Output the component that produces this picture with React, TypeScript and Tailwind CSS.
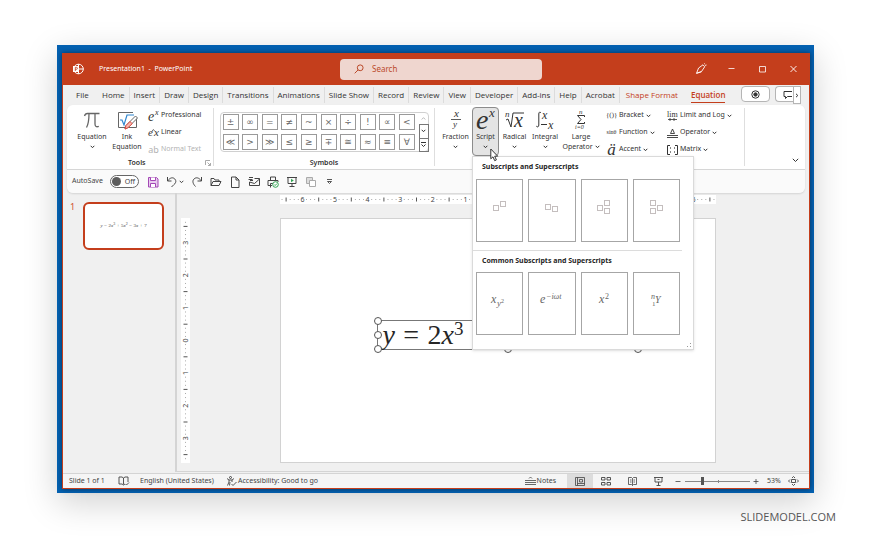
import type { ReactNode } from "react";
import clsx from "clsx";

type IconProps = { children: ReactNode; w?: number; h?: number; className?: string };

const Icon = ({ children, w = 12, h = 12, className }: IconProps) => (
  <svg
    width={w}
    height={h}
    viewBox={`0 0 ${w} ${h}`}
    fill="none"
    stroke="currentColor"
    strokeWidth="1"
    className={clsx("shrink-0 overflow-visible", className)}
    aria-hidden="true"
  >
    {children}
  </svg>
);

const Chevron = () => (
  <Icon w={5} h={4}>
    <path d="M.7 .8 2.5 2.7 4.3 .8" />
  </Icon>
);

const serif = "font-['Liberation_Serif',serif]";

const TitleBar = () => (
  <header className="flex h-8 items-center bg-[#c43e1c] text-white">
    <div className="flex w-[277px] shrink-0 items-center gap-[15px] pl-[9px]">
      <Icon>
        <circle cx="6.5" cy="6" r="4.800" />
        <path d="M6.500 1.200V6h4.800M6.500 6v4.800" />
        <rect x="1.500" y="3.500" width="5" height="5" fill="white" />
        <path d="M3.300 8V4.300h1.100a.9.9 0 0 1 0 2H3.300" stroke="#c43e1c" strokeWidth=".8" />
      </Icon>
      <h1 className="text-[7px] whitespace-pre">Presentation1  -  PowerPoint</h1>
    </div>
    <label className="flex h-[21px] w-[202px] items-center gap-2 rounded-sm bg-[#efd6cf] px-[14px] text-[#bb4a2a]">
      <Icon w={10} h={10}>
        <circle cx="6.200" cy="3.800" r="2.900" />
        <path d="M4.100 5.900.7 9.300" />
      </Icon>
      <input
        type="search"
        aria-label="Search"
        placeholder="Search"
        className="w-full bg-transparent text-[8px] outline-none placeholder:text-[#bb4a2a]"
      />
    </label>
    <div className="ml-auto flex">
      <button aria-label="Drawing" className="flex w-[31px] justify-center">
        <Icon>
          <path d="M1.500 10.300 3.600 5 8 1.800l1.700 2L6.400 8.700zM1.500 10.300l4.900-1.600M9 1.200l.8-.7M10 2.400l1.500-.4" strokeWidth=".9" />
        </Icon>
      </button>
      <button aria-label="Minimize" className="flex w-[31px] justify-center">
        <Icon>
          <path d="M2.500 5.500h6" strokeWidth=".8" />
        </Icon>
      </button>
      <button aria-label="Maximize" className="flex w-[31px] justify-center">
        <Icon>
          <path d="M2.500 3.500h6v5.500h-6z" strokeWidth=".8" />
        </Icon>
      </button>
      <button aria-label="Close" className="flex w-[31px] justify-center">
        <Icon>
          <path d="m2.500 3 6 6M8.500 3l-6 6" strokeWidth=".9" />
        </Icon>
      </button>
    </div>
  </header>
);

const tabs = [
  "Home", "Insert", "Draw", "Design", "Transitions", "Animations", "Slide Show",
  "Record", "Review", "View", "Developer", "Add-ins", "Help", "Acrobat",
];

const Tabs = () => (
  <nav className="flex h-5 items-center font-['Open_Sans',sans-serif] text-[8px] whitespace-nowrap text-[#333]">
    <button className="w-[35px] pl-[13px] text-left">File</button>
    {tabs.map((t) => (
      <button key={t} className="h-4 border-r border-[#dcdcdc] px-1">
        {t}
      </button>
    ))}
    <button className="px-[6px] text-[#c43e1c]">Shape Format</button>
    <button className="ml-[7px] flex h-[15px] items-center border-b border-[#c43e1c] font-semibold text-[#c43e1c]">
      Equation
    </button>
    <div className="ml-auto flex pr-2">
      <button aria-label="Record" className="flex h-4 w-[29px] items-center justify-center rounded-sm border border-[#b5b5b5] bg-white">
        <Icon w={9} h={9}>
          <circle cx="4.500" cy="4.500" r="3.700" />
          <circle cx="4.500" cy="4.500" r="1.700" fill="currentColor" />
        </Icon>
      </button>
      <button aria-label="Comments" className="ml-[5px] flex h-4 w-[18px] items-center justify-end rounded-l-sm border border-r-0 border-[#b5b5b5] bg-white pr-px">
        <Icon w={9} h={9}>
          <path d="M9 1.500H1v5h1.500v2l2-2H9" />
        </Icon>
      </button>
      <button aria-label="More commands" className="flex h-[18px] w-2 items-center justify-center border border-[#b5b5b5] bg-white">
        <Icon w={4} h={5}>
          <path d="M1 .8 2.800 2.500 1 4.200" />
        </Icon>
      </button>
    </div>
  </nav>
);

const symbols = [
  "±", "∞", "=", "≠", "~", "×", "÷", "!", "∝", "<",
  "≪", ">", "≫", "≤", "≥", "∓", "≅", "≈", "≡", "∀",
];

const BigButton = ({ icon, label, width, arrow = true, children }: {
  icon: ReactNode; label: string; width: string; arrow?: boolean; children?: ReactNode;
}) => (
  <button className={clsx("flex h-[49px] flex-col items-center", width)}>
    <span className="flex h-[25px] items-center justify-center">{icon}</span>
    <span className="leading-[10px]">{label}</span>
    {children}
    {arrow && (
      <span className="mt-[3px]">
        <Chevron />
      </span>
    )}
  </button>
);

const SmallButton = ({ icon, label, arrow, muted }: { icon: ReactNode; label: string; arrow?: boolean; muted?: boolean }) => (
  <button className={clsx("flex h-[17px] items-center gap-[2px]", muted && "text-[#b3b3b3]")}>
    {icon}
    <span>{label}</span>
    {arrow && <Chevron />}
  </button>
);

// text glyph drawn inside an icon
const G = ({ x, y, s, i, children }: { x: number; y: number; s: number; i?: boolean; children: string }) => (
  <text
    x={x}
    y={y}
    fontSize={s}
    fontStyle={i ? "italic" : "normal"}
    fontFamily="Liberation Serif, DejaVu Serif, serif"
    fill="currentColor"
    stroke="none"
  >
    {children}
  </text>
);

const Box = ({ x, y }: { x: number; y: number }) => <rect x={x + 0.5} y={y + 0.5} width="5" height="5" stroke="#c4bebe" />;

const templates = [
  { name: "Superscript", boxes: [[3, 6], [10, 2]] },
  { name: "Subscript", boxes: [[3, 5], [10, 7]] },
  { name: "Subscript-Superscript", boxes: [[3, 6], [10, 1], [10, 9]] },
  { name: "Left Subscript-Superscript", boxes: [[4, 1], [4, 9], [11, 6]] },
];

const common = [
  <>
    <G x={0} y={12} s={12} i>x</G>
    <G x={6} y={15} s={9} i>y</G>
    <G x={10} y={12} s={6}>2</G>
  </>,
  <>
    <G x={0} y={12} s={12} i>e</G>
    <G x={6} y={8} s={8} i>−iωt</G>
  </>,
  <>
    <G x={4} y={12} s={12} i>x</G>
    <G x={10} y={8} s={8}>2</G>
  </>,
  <>
    <G x={4} y={8} s={8} i>n</G>
    <G x={5} y={15} s={7}>1</G>
    <G x={8} y={12} s={10} i>Y</G>
  </>,
];

const card = "flex h-[63px] items-center justify-center border border-[#a6a6a6] bg-white pb-2";

const ScriptMenu = () => (
  <div className="absolute top-full left-0 z-10 h-[194px] w-[222px] border border-[#dadada] bg-white text-left shadow-sm">
    <h2 className="pt-[5px] pl-[9px] text-[7px] leading-[10px] font-bold text-[#262626]">Subscripts and Superscripts</h2>
    <div className="mt-[7px] ml-[3px] grid w-[204px] grid-cols-4 gap-[5px]">
      {templates.map((t) => (
        <button key={t.name} aria-label={t.name} className={card}>
          <Icon w={20} h={16}>
            {t.boxes.map(([x, y], i) => (
              <Box key={i} x={x} y={y} />
            ))}
          </Icon>
        </button>
      ))}
    </div>
    <hr className="mt-2 w-[209px] border-[#dcdcdc]" />
    <h2 className="pt-[5px] pl-[9px] text-[7px] leading-[10px] font-bold text-[#262626]">Common Subscripts and Superscripts</h2>
    <div className="mt-[6px] ml-[3px] grid w-[204px] grid-cols-4 gap-[5px] text-[#666]">
      {common.map((c, i) => (
        <button key={i} className={card}>
          <Icon w={i === 1 ? 23 : 18} h={18}>
            {c}
          </Icon>
        </button>
      ))}
    </div>
    <Icon w={6} h={6} className="absolute right-px bottom-px text-[#999]">
      <path d="M4 1.500h1M4 4.500h1M1 4.500h1" />
    </Icon>
  </div>
);

const Divider = () => <div className="mt-[3px] h-[58px] w-px bg-[#dedede]" />;

const Ribbon = () => (
  <section className="flex h-16 rounded-t-md bg-white text-[7px] whitespace-nowrap text-[#333]">
    <div className="flex w-[146px] flex-col">
      <div className="flex pt-[2px] pl-[7px]">
        <BigButton
          width="w-[36px]"
          label="Equation"
          icon={
            <Icon w={18} h={18}>
              <path d="M1.500 5C2 3 3 2.500 4.500 2.500H16.500M6 2.500C6 9 5.500 13 3.500 16.500M12 2.500V13c0 2.500 1.500 3.300 3.800 2.300" stroke="#666" strokeWidth="1.300" />
            </Icon>
          }
        />
        <BigButton
          width="w-[34px]"
          label="Ink"
          arrow={false}
          icon={
            <Icon w={22} h={20}>
              <path d="M20.500 8V17.500H2.500V2.500H17" stroke="#666" />
              <path d="m4 10 2 0 2 5 3-10h7" stroke="#2f86cf" strokeWidth="1.200" />
              <path d="m9 19 1-3.500L19.500 6l2 2-9.500 9.500z" fill="#fff" stroke="#666" />
              <path d="m9 19 1-3.500 4-4 2.200 2.200-4.200 4z" fill="#f4b9b0" stroke="#e0473c" />
            </Icon>
          }
        >
          <span className="leading-[10px]">Equation</span>
        </BigButton>
        <div className="pl-1">
          <SmallButton
            label="Professional"
            icon={
              <Icon w={11} h={14}>
                <G x={0} y={12} s={14} i>e</G>
                <G x={7} y={6} s={8} i>x</G>
              </Icon>
            }
          />
          <SmallButton
            label="Linear"
            icon={
              <Icon w={11} h={12}>
                <G x={0} y={9} s={11} i>e</G>
                <path d="m4.200 4 1.200-1.500L6.600 4" strokeWidth=".7" />
                <G x={6} y={9} s={11} i>x</G>
              </Icon>
            }
          />
          <SmallButton muted label="Normal Text" icon={<span className="w-[11px] text-[9px]">ab</span>} />
        </div>
      </div>
      <div className="flex pl-[61px] leading-[10px] font-semibold">
        Tools
        <Icon w={6} h={6} className="mt-[2px] mr-[2px] ml-auto text-[#aaa]">
          <path d="M.5 5V.5H5M2.500 2.500 5.500 5.500M5.500 3v2.500H3" />
        </Icon>
      </div>
    </div>
    <Divider />
    <div className="flex w-[220px] flex-col items-center">
      <div className="mt-[7px] flex h-10 w-[209px] rounded-sm border border-[#d0d0d0] pl-[2px]">
        <div className="grid w-[196px] grid-cols-10 content-center justify-items-start gap-y-1">
          {symbols.map((s) => (
            <button
              key={s}
              className="flex size-4 items-center justify-center border border-[#9a9a9a] font-['DejaVu_Sans',sans-serif] text-[9px] leading-none text-[#666]"
            >
              {s}
            </button>
          ))}
        </div>
        <div className="-my-px -mr-px ml-auto flex w-[10px] flex-col">
          <button aria-label="Scroll up" className="flex flex-1 rotate-180 items-center justify-center text-[#bbb]">
            <Chevron />
          </button>
          <button aria-label="Scroll down" className="flex flex-1 items-center justify-center border border-[#777]">
            <Chevron />
          </button>
          <button aria-label="More symbols" className="flex flex-1 items-center justify-center border border-t-0 border-[#777]">
            <Icon w={7} h={7}>
              <path d="M1 1.500h5M1.500 3.500l2 2 2-2" />
            </Icon>
          </button>
        </div>
      </div>
      <div className="mt-[6px] leading-[10px] font-semibold">Symbols</div>
    </div>
    <Divider />
    <div className="flex items-start pt-[2px] pl-1">
      <BigButton
        width="w-[33px]"
        label="Fraction"
        icon={
          <Icon w={12} h={23}>
            <G x={4} y={9} s={11} i>x</G>
            <path d="M1 11.500h10" strokeWidth=".8" />
            <G x={3} y={19} s={9} i>y</G>
          </Icon>
        }
      />
      <div className="relative">
        <div className="rounded-sm bg-[#e4e4e4] outline -outline-offset-1 outline-[#8c8c8c]">
          <BigButton
            width="w-[27px]"
            label="Script"
            icon={
              <Icon w={22} h={25}>
                <G x={1} y={22} s={28} i>e</G>
                <G x={14} y={10} s={13} i>x</G>
              </Icon>
            }
          />
        </div>
        <ScriptMenu />
        <Icon w={9} h={14} className="absolute top-[41px] left-[18px] z-20">
          <path d="M.8 1v9.800L3 8.800l1.700 3.900 1.700-.8-1.700-3.700h3z" fill="#fff" stroke="#333" />
        </Icon>
      </div>
      <BigButton
        width="w-[31px]"
        label="Radical"
        icon={
          <Icon w={20} h={22}>
            <G x={0} y={8} s={9} i>n</G>
            <path d="m1 11 2-1 3 8L8 4h11" />
            <G x={9} y={18} s={20} i>x</G>
          </Icon>
        }
      />
      <BigButton
        width="w-[30px]"
        label="Integral"
        icon={
          <Icon w={20} h={22}>
            <path d="M6 4C5 2.500 3.800 3 3.800 5v11c0 2-1.300 2.500-2.500 1.200" />
            <G x={7} y={10} s={12} i>x</G>
            <path d="M6 15.500h6" />
            <G x={13} y={20} s={12} i>x</G>
          </Icon>
        }
      />
      <BigButton
        width="w-[42px]"
        label="Large"
        arrow={false}
        icon={
          <Icon w={14} h={23}>
            <G x={5} y={6} s={7} i>n</G>
            <path d="M10.500 9V7.500h-7L7 11.500 3.500 15.500h7V14" />
            <G x={1} y={21} s={6} i>i=0</G>
          </Icon>
        }
      >
        <span className="flex items-center gap-[2px] leading-[10px]">
          Operator <Chevron />
        </span>
      </BigButton>
      <div className="w-[65px] pl-1">
        <SmallButton arrow label="Bracket" icon={<span className={clsx(serif, "w-[11px] text-[7px]")}>{"{()}"}</span>} />
        <SmallButton arrow label="Function" icon={<span className={clsx(serif, "w-[11px] text-[6px]")}>sinθ</span>} />
        <SmallButton arrow label="Accent" icon={<span className={clsx(serif, "w-[11px] text-[17px] leading-none italic")}>ä</span>} />
      </div>
      <div className="w-[77px]">
        <SmallButton
          arrow
          label="Limit and Log"
          icon={
            <Icon w={11} h={12}>
              <G x={0} y={7} s={8}>lim</G>
              <path d="M1 9.500h9M3 8v3M7 8v3" strokeWidth=".8" />
            </Icon>
          }
        />
        <SmallButton
          arrow
          label="Operator"
          icon={
            <Icon w={11} h={12}>
              <path d="M3.500 6.500 5.500 2l2 4.500zM0 8.500h11M0 10.500h11" strokeWidth=".9" />
            </Icon>
          }
        />
        <SmallButton
          arrow
          label="Matrix"
          icon={
            <Icon w={11} h={12}>
              <path d="M3 1.500H.5v9H3M8 1.500h2.500v9H8" />
              <path d="M3.500 3v2M7.500 3v2M3.500 7v2M7.500 7v2" stroke="#888" />
            </Icon>
          }
        />
      </div>
    </div>
    <Divider />
    <button aria-label="Collapse ribbon" className="mr-[6px] mb-[6px] ml-auto self-end">
      <Icon w={7} h={5}>
        <path d="m.8 .8 2.700 2.700L6.200 .8" />
      </Icon>
    </button>
  </section>
);

const quick = [
  {
    name: "Save",
    icon: (
      <Icon className="text-[#a347b5]">
        <path d="M1.500 1.500h8l1.500 1.500v8H1.500z" fill="#e9cdef" />
        <path d="M3.500 1.500v3h5v-3M3.500 11V7.500h5V11" fill="#fff" />
      </Icon>
    ),
  },
  {
    name: "Undo",
    icon: (
      <Icon>
        <path d="M1.500 1v4h4M1.800 4.800C4 1.500 7 1 8.800 3s1 4-.8 5.500L5.500 11" />
      </Icon>
    ),
  },
  {
    name: "Redo",
    icon: (
      <Icon>
        <path d="M10.500 1v4h-4M10.200 4.800C8 1.500 5 1 3 3s-1 5 1.500 7.500" />
      </Icon>
    ),
  },
  {
    name: "Open",
    icon: (
      <Icon>
        <path d="M1 9.500v-7h3l1 1.500h4v1.500M1 9.500l2-4h8l-2 4z" />
      </Icon>
    ),
  },
  {
    name: "New",
    icon: (
      <Icon>
        <path d="M2.500 1h4.500l3 3v7.500H2.500zM7 1v3h3" />
      </Icon>
    ),
  },
  {
    name: "Email",
    icon: (
      <Icon>
        <path d="M6.500 2.500h5v7h-10V6M1.500 6l5 1.500 5-4.500M.5 3.500h4M1 1.500h4M2 4.500h3" />
      </Icon>
    ),
  },
  {
    name: "Quick Print",
    icon: (
      <Icon>
        <path d="M3.500 4V1h5v3M5 9.500H1V4.500h10V6M3.500 11.500v-4h3" />
        <circle cx="8.500" cy="8.500" r="2.800" fill="#fff" stroke="#2fa351" />
        <path d="m7.200 8.500 1 1 1.600-1.800" stroke="#2fa351" />
      </Icon>
    ),
  },
  {
    name: "From Beginning",
    icon: (
      <Icon>
        <path d="M1 1.500h10M2 1.500v6h8v-6M6 7.500v3M3.500 10.500h5" />
        <path d="m5 2.800 2.800 1.700L5 6.200z" fill="#2fa351" stroke="none" />
      </Icon>
    ),
  },
  {
    name: "Shapes",
    icon: (
      <Icon className="text-[#aaa]">
        <path d="M1.500 1.500h6v6h-6z" fill="#ddd" />
        <path d="M4.500 4.500h6v6h-6z" fill="#fff" />
      </Icon>
    ),
  },
];

const QuickAccess = () => (
  <div className="flex h-6 items-center rounded-b-md border-t border-[#d6d6d6] bg-[#fafafa] pl-[5px] text-[7px] text-[#444]">
    <label htmlFor="autosave" className="w-[38px]">
      AutoSave
    </label>
    <div className="relative mr-2 flex h-[13px] w-[29px] items-center">
      <input
        id="autosave"
        type="checkbox"
        role="switch"
        className="h-[13px] w-[29px] appearance-none rounded-full border border-[#666] bg-white before:mt-px before:ml-px before:block before:size-[9px] before:rounded-full before:bg-[#5c5c5c]"
      />
      <span className="pointer-events-none absolute right-1 leading-none">Off</span>
    </div>
    <div className="flex items-center gap-[7px]">
      {quick.map((q) => (
        <div key={q.name} className="flex items-center gap-px">
          <button aria-label={q.name}>{q.icon}</button>
          {q.name === "Undo" && <Chevron />}
        </div>
      ))}
      <button aria-label="Customize toolbar" className="ml-[2px]">
        <Icon w={7} h={7}>
          <path d="M1 1.500h5M1.500 3.500h4L3.500 5.500z" strokeWidth=".9" />
        </Icon>
      </button>
    </div>
  </div>
);

const INCH = 32.6;

// inches run out from the centre; half inches get a tick, eighths a dot
const Ruler = ({ length, reach, vertical }: { length: number; reach: number; vertical?: boolean }) => {
  const mid = length / 2;
  const marks = [];
  for (let k = -reach * 8 - 5; k <= reach * 8 + 5; k++) {
    const p = mid + (k * INCH) / 8;
    const at = vertical ? { x: 4.5, y: p } : { x: p, y: 4.5 };
    if (p < 2 || p > length - 2) continue;
    if (k % 8 === 0) {
      marks.push(
        <text
          key={k}
          x={at.x}
          y={at.y}
          dy="2.5"
          fontSize="7"
          textAnchor="middle"
          fill="#444"
          transform={vertical ? `rotate(-90 ${at.x} ${at.y})` : undefined}
        >
          {Math.abs(k / 8)}
        </text>
      );
    } else if (k % 4 === 0) {
      marks.push(
        <rect key={k} x={at.x - (vertical ? 2 : 0.5)} y={at.y - (vertical ? 0.5 : 2)} width={vertical ? 4 : 1} height={vertical ? 1 : 4} fill="#555" />
      );
    } else {
      marks.push(<rect key={k} x={at.x - 0.5} y={at.y - 0.5} width="1" height="1" fill="#aaa" />);
    }
  }
  return (
    <svg
      viewBox={vertical ? `0 0 9 ${length}` : `0 0 ${length} 9`}
      className={clsx("block shrink-0 bg-white", vertical ? "w-[9px]" : "w-full")}
      aria-hidden="true"
    >
      {marks}
    </svg>
  );
};

const Op = ({ children }: { children: string }) => <span className="mx-[0.3em]">{children}</span>;

const Formula = () => (
  <>
    <i>y</i>
    <Op>=</Op>2<i>x</i>
    <sup>3</sup>
    <Op>+</Op>5<i>x</i>
    <sup>2</sup>
    <Op>−</Op>3<i>x</i>
    <Op>+</Op>7
  </>
);

const handles = [
  "-top-1 -left-1", "top-[10px] -left-1", "-bottom-1 -left-1", "-bottom-1 left-[126px]",
  "-right-1 -bottom-1", "-top-1 -right-1", "top-[10px] -right-1",
];

const Workspace = () => (
  <main className="flex flex-1">
    <aside className="flex w-[112px] shrink-0 items-start pt-[9px] pl-[7px]">
      <span className="w-[13px] text-[9px] leading-[10px] text-[#d0532f]">1</span>
      <button className={clsx(serif, "flex h-[48px] w-[81px] items-center justify-center rounded-md border-2 border-[#c43e1c] bg-white text-[5px] whitespace-nowrap text-[#444] [&_sup]:text-[4px]")}>
        <span>
          <Formula />
        </span>
      </button>
    </aside>
    <div className="flex flex-1 border-b border-l-2 border-[#d4d4d4] pl-1">
      <div className="pt-[25px]">
        <Ruler vertical length={245} reach={3} />
      </div>
      <div className="flex flex-1 flex-col items-center pt-[2px] pr-1">
        <div className="w-full max-w-[436px]">
          <Ruler length={436} reach={6} />
          <div className="relative mt-[14px] aspect-video border border-[#d2d2d2] bg-white">
            <div className={clsx(serif, "absolute top-[101px] left-[96px] flex h-[30px] w-[262px] items-center border border-[#777] pl-[5px] text-[28px] leading-none whitespace-nowrap text-[#262626] [&_sup]:text-[19px]")}>
              <span>
                <Formula />
              </span>
              {handles.map((h) => (
                <span key={h} className={clsx("absolute size-2 rounded-full border border-[#555] bg-white", h)} />
              ))}
            </div>
          </div>
        </div>
      </div>
    </div>
  </main>
);

const StatusBar = () => (
  <footer className="mt-px flex h-[15px] items-center border-t border-[#d4d4d4] bg-[#f5f5f5] pl-[6px] text-[7px] whitespace-nowrap text-[#444]">
    <span className="w-[49px]">Slide 1 of 1</span>
    <button aria-label="Spelling" className="w-[22px]">
      <Icon w={11} h={10}>
        <path d="M5.500 2v6.500M5.500 2 4 1H1v7h3l1.500 1L7 8M5.500 2 7 1h3v5" strokeWidth=".9" />
        <path d="m7.500 8 1 1L11 6.500" strokeWidth=".9" />
      </Icon>
    </button>
    <span className="w-[86px]">English (United States)</span>
    <button className="flex items-center gap-px">
      <Icon w={11} h={10}>
        <circle cx="4.500" cy="1.500" r="1" />
        <path d="M1 2.500 3 4v2L1.500 9.500M8 2.500 6 4v2M4 6l-.5 3.500M3 4h3M5.500 8l1.500 1.500L10.500 6" strokeWidth=".9" />
      </Icon>
      Accessibility: Good to go
    </button>
    <button className="mr-[11px] ml-auto flex items-center gap-px">
      <Icon w={11} h={10}>
        <path d="m4 2.500 1.500-1.500L7 2.500M0 4.500h11M0 6.500h11M0 8.500h11" strokeWidth=".8" />
      </Icon>
      Notes
    </button>
    <button aria-label="Normal view" className="flex h-full w-[26px] items-center justify-center bg-[#dcdcdc]">
      <Icon w={10} h={9}>
        <path d="M.5 .5h9v8h-9zM2.500 .5v8M4.500 2.500h3V5h-3zM2.500 6.500h7" strokeWidth=".8" />
      </Icon>
    </button>
    <button aria-label="Slide sorter" className="flex w-[26px] justify-center">
      <Icon w={10} h={9}>
        <path d="M.5 .5H4V3H.5zM6 .5h3.500V3H6zM.5 5.500H4V8H.5zM6 5.500h3.500V8H6z" strokeWidth=".9" />
      </Icon>
    </button>
    <button aria-label="Reading view" className="flex w-[26px] justify-center">
      <Icon w={9} h={9}>
        <path d="M4.500 1.500v7M.5 .5h3l1 1 1-1h3v7h-3l-1 1-1-1h-3zM2 3h1.500M2 5h1.500M5.500 3H7M5.500 5H7" strokeWidth=".8" />
      </Icon>
    </button>
    <button aria-label="Slide show" className="flex w-[26px] justify-center">
      <Icon w={9} h={9}>
        <path d="M0 .5h9M1 .5v4.500h7V.5M4.500 5v3.500M2.500 8.500h4M3.500 2.500h2" strokeWidth=".9" />
      </Icon>
    </button>
    <button aria-label="Zoom out" className="mr-1 ml-1">
      <Icon w={6} h={7}>
        <path d="M.5 3.500h5" strokeWidth=".8" />
      </Icon>
    </button>
    <div className="relative flex w-[65px] items-center">
      <input
        type="range"
        aria-label="Zoom"
        defaultValue={26}
        className="h-px w-full appearance-none bg-[#888] [&::-webkit-slider-thumb]:h-2 [&::-webkit-slider-thumb]:w-[3px] [&::-webkit-slider-thumb]:appearance-none [&::-webkit-slider-thumb]:bg-[#555]"
      />
      <span className="absolute left-1/2 h-[3px] w-px bg-[#888]" />
    </div>
    <button aria-label="Zoom in" className="mr-2 ml-[3px]">
      <Icon w={6} h={7}>
        <path d="M.5 3.500h5M3 1v5" strokeWidth=".8" />
      </Icon>
    </button>
    <span className="w-[21px] tabular-nums">53%</span>
    <button aria-label="Fit slide to window" className="mr-[10px]">
      <Icon w={11} h={10}>
        <path d="M3.500 3.500h4v3h-4zM4 2l1.500-1.500L7 2M4 8l1.500 1.500L7 8M2 3.500.5 5 2 6.500M9 3.500 10.500 5 9 6.500" strokeWidth=".9" />
      </Icon>
    </button>
  </footer>
);

export default function App() {
  return (
    <div className="flex min-h-screen flex-col bg-white pt-[45px] pr-[56px] pl-[57px] font-['Noto_Sans',sans-serif]">
      <div className="flex flex-1 flex-col bg-[#0461b1] pt-2 pr-1 pb-1 pl-[5px] shadow-[0_10px_32px_rgba(0,0,0,0.18)]">
        <div className="flex flex-1 flex-col border border-t-0 border-[#c43e1c] bg-[#f0f0f0] shadow-[0_0_5px_rgba(0,0,0,0.5)]">
          <TitleBar />
          <Tabs />
          <div className="mx-1 rounded-md shadow-[0_1px_2px_rgba(0,0,0,0.12)]">
            <Ribbon />
            <QuickAccess />
          </div>
          <Workspace />
          <StatusBar />
        </div>
      </div>
      <p className="-mr-[22px] flex h-[46px] items-center justify-end pt-[2px] font-['Open_Sans',sans-serif] text-[11px] text-[#555]">
        SLIDEMODEL.COM
      </p>
    </div>
  );
}
